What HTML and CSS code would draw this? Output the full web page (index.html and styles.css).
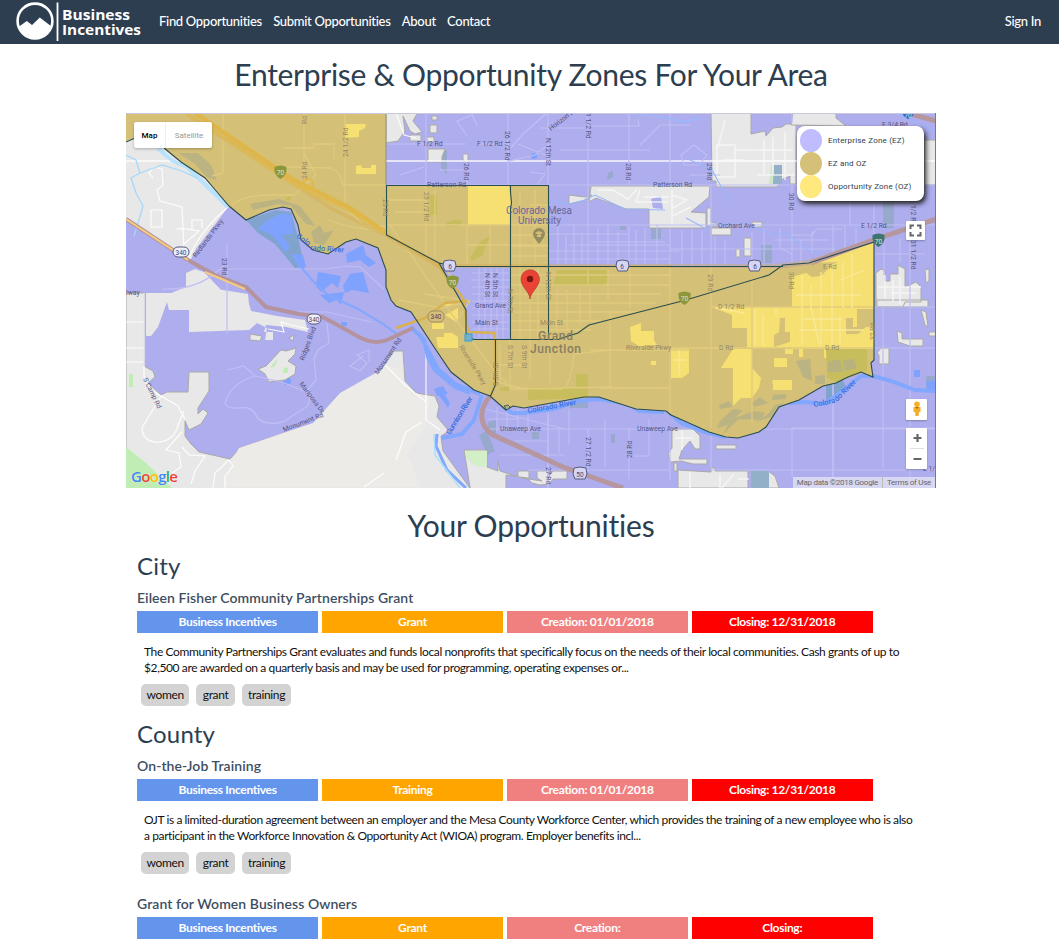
FILE: index.html
```html
<!DOCTYPE html>
<html lang="en">
<head>
<meta charset="utf-8">
<title>Business Incentives</title>
<link rel="stylesheet" href="styles.css">
</head>
<body>
<header class="navbar">
  <svg class="logo" width="126" height="44" viewBox="0 0 126 44" role="img" aria-label="Business Incentives">
    <circle cx="19" cy="21" r="17.4" fill="none" stroke="#fff" stroke-width="2.6"/>
    <path d="M2.500 27L10.800 21L16 25L23.800 17.500L35.500 26.500A17.500 17.500 0 0 1 2.500 27Z" fill="#fff"/>
    <path d="M41.500 2.500V41" stroke="#fff" stroke-width="1.800"/>
    <text class="logo-text" x="46" y="20" textLength="68" lengthAdjust="spacingAndGlyphs">Business</text>
    <text class="logo-text" x="46" y="35" textLength="79" lengthAdjust="spacingAndGlyphs">Incentives</text>
  </svg>
  <nav class="links">
    <a>Find Opportunities</a><a>Submit Opportunities</a><a>About</a><a>Contact</a>
  </nav>
  <a class="signin">Sign In</a>
</header>
<main class="page">
  <h1 class="title title-zones">Enterprise &amp; Opportunity Zones For Your Area</h1>
  <section class="map">
    <svg class="map-canvas" width="810" height="375" viewBox="126 113 810 375">
      <rect x="126" y="113" width="810" height="375" fill="#aeadee"/>
      <!-- parks and water inside the enterprise zone -->
      <path fill="#98a9cd" d="M441 153l6-3v24l-6-6zM761 245h11v18h-11zM883 200h11v28h-11zM488 422l8-2v14l-9-2zM479 435l8-4 8 20-8 4zM532 432h7v7h-7zM570 400h18v8h-18zM611 434h4v9h-4zM620 226h6v4h-6zM651 226h10v13h-10zM608 173l5-2v6l-6 3zM926 376h9v16h-9z"/>
      <path fill="#81a4cf" d="M246 220l30-10 15 2 7 25 3 14 4 16-10 1-20-24-17-11zM826 378l14-5 6 15-20 13z"/>
      <g fill="#7fa2ff">
        <path d="M266 221l17-8 9 3 1 18-12 1 9 11-4 6-14-17-14-6zM346 254l17-9 3 10 10 8-7 4-9-7-13 3zM291 254l12 1 3 12-6 2zM318 272l23 4-3 12-6-5-11 9-5-6zM350 274l13-2 6 21-17-3-7 3-2-7zM320 295l24-3-3 13-4-5-8 3zM434 389l9-3 5 8-11 2zM438 394l3-5 9 14-2 5z"/>
        <circle cx="534" cy="156" r="3"/><circle cx="287" cy="381" r="4"/><path d="M341 322h6v4h-6zM914 370h6v7h-6zM926 382l9-2v10h-8z"/>
      </g>
      <!-- land outside of every zone -->
      <g fill="#e8e8e8" stroke="#aaa9a8" stroke-width="1">
        <path d="M125 142l9-4 30 10 17 14 24 16 12 14 12 14-33 43-7 14-24-19-39-26z" stroke="none"/>
        <path d="M195 269l9 3 18 19-18-4 44 7 1 10 2 7 26 5 28 4 3 12-22-5-20-2-2 7 9 0v8h-8l2-12-10-5-8 7-60 2v-22h-20l-2-8-9 25-7 9-5 0V293h25l15-6v-14z" stroke="none"/>
        <path d="M126 293h18v73l9 5 2 6-7 6 13 12 6-3h21l1-20h20v19l-11 17v6l5-5 5 4-7 11-12 6-4-9v15l6 8 8 8 31 7 10-11 44-15 30-9 13-16 17-15 33-17 17-25 9 0 2 30 11 12 19 3 4 10-2 11 12 14-8 5 2 15 29 40H126z"/>
        <path d="M250 334l12 2-2 5-10-1zM289 338l5-3-1 6zM281 350l5 1 10-3-1 6-7 7 8 5-1 8-10 6-16 2-4-8-7-5 8-3z"/>
        <path d="M386 113v30l12-2 7-10-2-15 7 15 5 3 7-2-9-11 5-9zM432 116h5v4h-5zM430 125h7v8h-7zM410 135l11 0v6h-11zM427 137h7v5h-7zM428 149h17l-3 8v5h-14zM463 154h5v9l-5-3z"/>
        <path d="M569 195l16 2 7-2-9 6-14 3zM591 186h119l-1 11-18 15 15 1v15h-57v-19h-23l-30-11-7 4z"/>
        <path d="M711 113h40v21l14-3 1 5 7-8 9-1 4-3h10v60h-6v-8l-7 3-6 8h-61v-6h-4z"/>
        <path d="M711 208h-4v18h10v-3l-6-1zM711 228h20v7h-20zM752 222h10v5h-10zM744 238h7v18h-7zM736 249h4v8h-4zM793 113h43v-1l0 6 10 8-55-1zM924 140h12v45h-12z"/>
        <path d="M876 273l5-4 4 2v10h5v-7l8 0v-9l7 4v18l11-5 5 5v15h-16l-2 5h-27zM925 270l4-1v12l-3 2zM921 310l5 2 2 15-3-2zM897 331l5 2v6h21v7h-13l-12-4zM881 348h8v16h-10v-9l-2-2zM877 300h51v7h-51zM929 332h7v4h-7z"/>
        <path d="M672 429h21l7 7v13h-5l-5-8-8 9-3 9h28v5h-14l-12-3-11 1-2-9 4-5zM716 445h20v4h-20zM678 470l33 2v-4l4 0v3h33v17h-70zM768 471l7 5 4 12h-11zM674 463h3v8h-3z"/>
        <path d="M464 450h23v17l11 4v-10l2 10 15 5h3v-5h11v7h-7l20 3-5-3v-7h12l0 5 4-5h14v8h-14l-4 5-9 1-8-2-5-5-21-3v18h-35z"/>
      </g>
      <path fill="#aeadee" d="M651 199l10-3 2 13-10-1z"/>
      <path fill="#c0edb3" d="M126 447l20 16 26 25h-46zM129 374h4v13h-4zM272 365l6-7-3 8-5 2zM284 367l4 1v5h-5z"/>
      <path fill="#d2efc8" d="M466 451h21v15l-10 1-11-9z"/>
      <path fill="#ecebe8" d="M233 459l6-11 44-15 30-10 27-30 48-27 11 2 4 15 12 10 15 4-3 27-20 30 14 33H222z"/>
      <path fill="#cfe6c6" d="M771 165h3v19h-5z"/><path fill="#92b0c8" d="M774 165h8v19h-9zM751 471h18v17h-18z"/>
      <!-- streets -->
      <g fill="none" stroke="#fff" stroke-width="1.2" opacity=".9">
        <path d="M144 293v83q1 12 17 20l17 10 7 13M126 322h18M126 348h18M126 362h18M162 395q-9 14-20 33c0 20 32 19 36-3l6-14M182 432l-16 18 13 3 2 14-9 6M182 447l7 8 16 1-10 15-4 13M229 460l-14 13-2 15M229 460l4 6-8 10v12M396 113l8 22 12 3M153 178l-4-5 5-6 8 2 1 16-6 5 3 11 22 6 2 44M151 210h11v17h-11zM176 229h16v-9h10v8M183 245l16-14-20-3M229 206q-30 25-42 56M268 329l16 3-3-10 10 3 18 4M426 345v75l14 10M385 365l20 20 20 16M396 460l10-28 16-10M364 487l20-14"/>
        <path d="M126 161h810" stroke-width="1.6"/>
      </g>
      <g fill="none" stroke="#f8f8f8" stroke-width="1.5" opacity=".8">
        <path d="M717 145h18v32h-18zM725 120l-7 27M735 150h18M722 160h22M764 140v35M773 137v38M785 132v48M754 150h39M757 175h38M598 190l15 0 15 9 9-10M640 190l-4 12h32M644 197h25M672 195l15 5-14 8M672 216l19-9M672 190v36M885 275v23M893 280v22M900 277v27M878 287h43M891 293h25M675 438h18M682 430v20M690 472v16M720 474v14M734 474l-12 14M738 479h11"/>
      </g>
      <g fill="none" stroke="#c0bff4" stroke-width="1.2">
        <path d="M386 185h550M386 144h40M436 144h30M426 113v72M467 163v22M508 113v72M548 113v375M588 126v142M629 113v71M629 226v42M670 113v72M670 228v40M711 185v83M752 232v30M792 113v10M792 185v78M833 225v263M874 203v40M549 225h120M669 225h267M549 144l-14 11-26 6-1-10 15-17 25-22M586 113l3 13h50l-1-7M467 136l-10-15 15-6 5 10M477 144h31M518 144l30 12M518 205l30 2M440 170h30M400 175l24-8M530 172l15 2-8 11M540 128h48M560 150h90M640 145l20-20h30M681 155l13-10 13 10-8 10h-15zM690 175h30M608 225v43M570 245h100M558 225v43M566 235v33M574 225v43M582 233v34M598 227v40M618 232v35M636 230v38M645 228v40M657 225v43M682 230v38M692 229v39M702 230v38M549 234h80M549 251h130M549 259h120M590 242h75M670 249h165M715 237v30M725 240v27M764 228v35M774 240h55M780 228v20l12 6M801 239v24M812 231v23M845 225v27M856 228v20M792 235h20l5-6h25M850 190v35M875 254h50M910 225v263M884 245v30M900 238v24"/>
        <path d="M227 244v90M227 269h98l24-3 11 1 24 22M284 312l43 0 44 10M162 289q40 2 65-27M227 370l17-4 11 10 27 6 24 10 10-12-2-21 4-9 11-7-2-20M255 376q-26 8-30 28c8 10 20-3 30 9 5 15 30 11 34 5l19-12 3-14M363 356l-13 10 10 5 7-8-10-8 12-5v12M485 409l80 20h371M488 419h30M497 407v24M507 408v20M518 409v20M528 412v20M548 415v73M559 428v25M569 409v35M588 429v43M605 420v46M629 429v50M649 419v37h-20M670 429v51M711 428v43M792 428v49M833 428v50M485 429h183M515 441h33M500 455h64M528 470h108M608 470h61M711 470h225M792 428h144M833 380v100M883 308v160M874 348h62M874 307h62"/>
      </g>
      <!-- rivers and creeks -->
      <g fill="none">
        <path d="M158 148q15 16 28 18l32 31 10 10" stroke="#b9e2ff" stroke-width="4"/>
        <path d="M126 155l10 5 4 13-9 5 5 15 7 13-5 17-4 13M140 173l22-8 20 6 15 7" stroke="#a5d8fa" stroke-width="1.3"/>
        <path d="M411 327l13 13 4 17 7 13 20 17 15 6M420 335l18 34 17 15 25 10M482 395l-8 25-12 14-20 4M502 406l10 7 12 0 30-4 23-8 22-2 30 5 10 7 25 1M669 412l12 11 24 9 20 5M788 403l18-1 18 2 15-10 22-18h12l18 5 24 9 22 1" stroke="#81a7ff" stroke-width="4"/>
        <path d="M301 267l10 12 17 16 30 14 25 15 15 11" stroke="#81a7ff" stroke-width="2"/>
        <path d="M437 434l-1 12 11 24 19 18" stroke="#81a7ff" stroke-width="3"/><path d="M434 434l1 21 19 25 6 8" stroke="#ace0fa" stroke-width="1.5"/>
        <path d="M626 113l28 3 30 5 16-3M666 117l18 6 15-5M549 201l20 3 16-4 10-5 30 14 40 1M688 159l24 11 18 33M686 218l24 13M712 224l35 0 25 10 16 0 20 16 22 7 34-3M896 113l40 19" stroke="#99b8fb" stroke-width="1.1"/>
      </g>
      <!-- combined enterprise and opportunity zones -->
      <path fill="#d5c078" d="M126 113h260v72h163v81h234l26-3 65-21v118l-3 3 2 14-12-5-13 5-12 6-13 3-24 14-20 7-13 20-7 5-21 6-12-1-17-5-38-17-5-4-30-2-37-12h-15l-60 11-11-2-7 4-16-14-16-6-23-18-15-22-17-26-8-12-15-6-5-6-5-13v-17l-8-22-22-9-10 3-18 12-15-4-12-10-3-15-7-16-8-2-14 3-23 10-17-14-12-14-12-14-24-16-17-14-30-10-9 4z"/>
      <path fill="#aeadee" d="M439 263l16 3h55v73h-37l-7-6v-23z"/>
      <path fill="none" stroke="#c0bff4" stroke-width="1.200" d="M472 273h37M470 280h40M472 287h37M472 294h37M472 301h37M472 308h37M472 315h37M472 322h37M472 329h37M479 268v70M485 268v70M491 268v70M497 268v70M503 268v70"/>
      <g fill="#f7e072">
        <path d="M468 185h41l2 18v22h-43zM792 277l14-4 5-10 63-20v106h-82zM712 307h80v41h-45v-20h-15v-13zM721 368l12-19h19v19l9 10-2 10-7 10-11 0-8 8v-38zM774 358h13v9h-13zM773 380h19v10h-19v-6l-1-1zM785 349h8v5h-8zM799 349h4v8h-4zM824 349h8v9h-8zM630 327l11-4v8h13v9l3 5-12 0-3 3-11-7zM670 348h19v25l-7 5h-11v-25zM651 361h5v4h-5zM345 124h21l-1 4-6 3v6l-14 1zM356 166l5-1 1 3h9v-3h5v9h-20zM445 315l13-7v15zM432 323h12v6h-12zM436 337l8 0v-4h8l6 4v11h-20zM443 302h9v4h-9z"/>
      </g>
      <path fill="#d5c078" d="M857 309h17v18h-8l-8 7h-12v-16h7v9h4zM780 318h5v14h5v10l-16 5v-12l5-3zM809 263l30-1-6 2-12 12-9 1-7-5z"/>
      <g fill="#c8bd5c"><path d="M557 270h50l2 12-9 4h-47zM528 387h48v-13h12v24l-60 2zM430 195h7v20h-7zM446 223l10-4 7 2-4 5-13 1zM470 258l10-16 10-6-8 20-10 5zM500 387h10v4h-10zM826 349h41v22l-30 11-10-4zM285 199l6-4-1 6z"/></g>
      <g fill="#b3af87"><path d="M178 153h20l13 12 6 15-9-2-14-15zM311 232l9-7 4 8 10-3-10 15-10-2zM796 361l14-2 2 22-9-4zM815 376l10-1v9h-10zM828 362l12-3 3 13h-15zM843 360l11-1 3 9-13 3zM719 405l10-4 4 6-13 2zM720 421l13-12 10 1-8 8 19-7 11 2-5 7-21-1-16 15 5-9-11 3zM752 403l8-6 8 6-14 4zM773 395l13-1 0 5-14 1zM754 422l14-8 7-9 9-2-12 14zM250 204l29-5 21 7 15 20-9-2-15-18-13-2-25 6z" opacity=".75"/></g>
      <g fill="none" stroke="#dfca7d" stroke-width="1.3">
        <path d="M223 113v60l-11 3M304 113v60M345 113v95l20 18h21M386 225h163M426 185v73M435 190v68M467 225v41M467 245h82M490 225v41M520 190v76M535 190v76M386 200h40M395 212h30M530 205h19M511 213h38M511 235h38M511 246h38M511 256h38M283 167l48 1q9 3 12 17h43M232 205q10-10 40-10l22 0 22-20-12-22M284 148h30v-4h20v15M328 220q25 10 58 10M548 266v73M520 266v73M530 266v73M538 266v73M557 290v49M567 290v40M580 290v35M590 290v30M511 275h160M511 285h158M511 294h150M511 303h145M511 312h130M511 321h90M511 330h80M588 284v-14M608 270v30M630 268v40M670 268v145M711 266v162M752 278v145M711 307h163M670 348h204M610 310v77M590 350h100M500 345v38l20 5 42 1q9-3 12-35l36-4M510 340v50M530 340v39M550 340v43M500 365h25M600 388h70M390 225l66 95 38 50 18 19 100-2M399 300l42 8 25-6M425 294l45 7-15 22M445 267l11 18"/>
      </g>
      <g fill="none" stroke="#fae996" stroke-width="1.3"><path d="M802 275v70M811 285v23l8 35M821 272v74M832 264v83M843 262v46M852 254v54M796 295h65M799 330h65M804 319h38M755 310v35M763 314v32M776 308v8M716 308l28 5M674 360h12M679 350v25M840 280l25-10M840 315v30"/></g>
      <!-- main roads -->
      <g fill="none" stroke-linejoin="round">
        <path d="M126 219l62 41 27 15 31 12 20 20 33 7 24 3 36 20q15 8 28 3l26-12" stroke="#b5939e" stroke-width="4"/>
        <path d="M126 219l62 41M205 272l40 17" stroke="#f5cc7e" stroke-width="2"/>
        <path d="M187 114l147 96 52 25 52 31 34 0h304l33-4 61-21 56-18" stroke="#d2ad4f" stroke-width="4" opacity=".4"/>
        <path d="M195 113l97 66 60 30 34 24" stroke="#dfb649" stroke-width="4.500"/>
        <path d="M187 114l106 70 56 27 38 23" stroke="#e1ba49" stroke-width="1.500"/>
        <path d="M386 234l50 29 27 35 5 34 27 1v13M396 328l29-10 20-15 22-2M495 340v43l-4 13" stroke="#d8b250" stroke-width="2.500"/>
        <path d="M490 396c-10 12-13 28 3 39l70 32 60 21" stroke="#b6969f" stroke-width="5"/>
        <path d="M811 263l65-24 60-20" stroke="#b6969f" stroke-width="5"/>
        <path d="M669 267h116l30-4M549 266h122" stroke="#c5ad8c" stroke-width="2"/>
        <circle cx="308" cy="184" r="5" stroke="#e1b846" stroke-width="2"/><path d="M908 113l28 8" stroke="#b6969f" stroke-width="5"/>
      </g>
      <!-- zone outlines -->
      <g fill="none" stroke="#294e4c" stroke-width="1.1">
        <path d="M126 142l9-4M164 148l17 14 24 16 12 14 12 14 17 14 23-10 14-3 8 2 7 16 3 15 12 10 15 4 18-12 10-3 22 9 8 22v17l5 13 5 6 15 6 8 12 17 26 15 22 23 18 16 6 16 14 7-4 11 2 60-11h15l37 12 30 2 5 4 38 17 17 5 12 1 21-6 7-5 13-20 20-7 24-14 13-3 12-6 13-5 12 5-2-14 3-3V242l-65 21-26 2-14 10-83 25-97 25-11 8-19 6M559 339.500h-86l-7-6.500v-23l-27-47-52.500-28v-49.500h162v154M510.500 186v6l1 11-1 5v131M439 263l16 3.500h328M495.500 339v46l-5 11"/>
        <path d="M386 113v72" stroke="#8c865e" stroke-width=".8"/>
      </g>
      <path d="M504 406l4-1 2 2-3 3z" fill="#b3af87" stroke="#294e4c" stroke-width=".8"/>
      <rect x="465" y="334" width="7" height="7" fill="#7aaec4" stroke="#27a4ea"/>
      <!-- map labels -->
      <g class="place">
        <text x="506" y="214" textLength="66">Colorado Mesa</text><text x="518" y="223.500" textLength="43">University</text>
      </g>
      <g class="city"><text x="538" y="340" textLength="35">Grand</text><text x="530" y="353" textLength="51">Junction</text></g>
      <g class="road">
        <text x="417" y="146">F 1/2 Rd</text><text x="477" y="146">F 1/2 Rd</text><text x="427" y="187">Patterson Rd</text><text x="653" y="187">Patterson Rd</text>
        <text x="551" y="131" transform="rotate(-38 551 131)">Horizon Dr</text><text x="718" y="228">Orchard Ave</text><text x="861" y="228">E 1/2 Rd</text><text x="882" y="127">E 3/4 Rd</text><text x="475" y="308">Grand Ave</text><text x="475" y="325">Main St</text><text x="500" y="431">Unaweep Ave</text><text x="637" y="431">Unaweep Ave</text><text x="126" y="295">lway</text><text x="923" y="471">E 1/2</text>
        <text transform="translate(505 131) rotate(90)">26 1/2 Rd</text><text transform="translate(546 138) rotate(90)">N 12th St</text><text transform="translate(586 113) rotate(90)">1 1/2 Rd</text><text transform="translate(464 163) rotate(90)">26 Rd</text><text transform="translate(626 163) rotate(90)">28 Rd</text><text transform="translate(707 163) rotate(90)">29 Rd</text><text transform="translate(789 193) rotate(90)">30 Rd</text><text transform="translate(911 205) rotate(90)">1/2 Rd</text><text transform="translate(911 240) rotate(90)">31 1/2 Rd</text><text transform="translate(222 258) rotate(90)">23 Rd</text><text transform="translate(485 273) rotate(90)">N 4th St</text><text transform="translate(492.500 273) rotate(90)">N 5th St</text><text transform="translate(586 437) rotate(90)">27 1/2 Rd</text><text transform="translate(632 458) rotate(-90)">28 Rd</text><text transform="translate(546 467) rotate(90)">27 Rd</text>
        <text transform="translate(196 258) rotate(-53)">Redlands Pkwy</text><text transform="translate(304 361) rotate(-70)">Ridges Blvd</text><text transform="translate(299 384) rotate(53)">Mariposa Dr</text><text transform="translate(284 432) rotate(-21)">Monument Rd</text><text transform="translate(378 375) rotate(-56)">Monument Rd</text><text transform="translate(143 379) rotate(64)">S Camp Rd</text>
      </g>
      <g class="road muted">
        <text transform="translate(307 124) rotate(-90)">Rd N</text><text transform="translate(307 179) rotate(-90)">24 Rd</text><text transform="translate(348 157) rotate(-90)">24 1/2 Rd</text><text transform="translate(383 199) rotate(90)">25 Rd</text><text transform="translate(424 192) rotate(90)">25 1/2 Rd</text><text transform="translate(546 272) rotate(90)">N 12th St</text><text transform="translate(508 289) rotate(90)">N 7th St</text><text transform="translate(508 345) rotate(90)">S 7th St</text><text transform="translate(522 345) rotate(90)">S 9th St</text><text transform="translate(708 274) rotate(90)">29 Rd</text><text transform="translate(789 272) rotate(90)">30 Rd</text><text transform="translate(459 347) rotate(58)">Riverside Pkwy</text><text transform="translate(498 386) rotate(-90)">S 5th St</text><text x="540" y="325">Main St</text><text x="626" y="350">Riverside Pkwy</text><text x="719" y="350">D Rd</text><text x="825" y="350">D Rd</text><text x="823" y="269">E Rd</text><text x="718" y="309">D 1/2 Rd</text><text transform="translate(875 340) rotate(-90)">32 Rd</text>
      </g>
      <g class="river"><text transform="translate(296 237) rotate(36)">Colo</text><text transform="translate(310 250) rotate(4)">rado River</text><text transform="translate(528 413) rotate(-10)" textLength="49">Colorado River</text><text transform="translate(450 435) rotate(-58)" textLength="43">Gunnison River</text><text transform="translate(814 407) rotate(-11)">Colora</text><text transform="translate(837 402) rotate(-45)">do River</text></g>
      <g fill="#eeeefc" stroke="#555a7c">
        <rect x="173" y="247" width="16" height="10" rx="5"/><rect x="307" y="314" width="14" height="10" rx="5"/><rect x="428" y="311" width="16" height="11" rx="5" fill="#d5c078" stroke="#9e8e62"/>
        <path d="M444 261q5-2 11 0l1 5-2 5h-9l-2-5zM617 261q5-2 11 0l1 5-2 5h-9l-2-5zM749 261q5-2 11 0l1 5-2 5h-9l-2-5zM574 468q6-2 12 0l1 6-2 5h-10l-2-5z" fill="#d6d5f5"/>
        <g stroke="none" fill="#8b973a"><path d="M274.500 167q6-3 12 0 1 8-6 12-7-4-6-12z"/><path d="M678.500 293q6-3 12 0 1 8-6 12-7-4-6-12zM446.500 277q6-3 12 0 1 8-6 12-7-4-6-12z"/><path fill="#3d7571" d="M872.500 235q6-3 12 0 1 8-6 12-7-4-6-12z"/><path fill="#326bd7" d="M902 112h12q0 5-6 7-5-2-6-7z"/></g>
      </g>
      <g class="shield-number"><text x="181" y="255">340</text><text x="314" y="322">340</text><text x="436" y="319">340</text><text x="450" y="269">6</text><text x="622" y="269">6</text><text x="755" y="269">6</text><text x="580" y="477">50</text></g>
      <g class="shield-number light"><text x="280.500" y="175">70</text><text x="452.500" y="285">70</text><text x="684.500" y="301">70</text><text x="878.500" y="243.500">70</text><text x="908" y="118">70</text></g>
      <path fill="#958b5e" d="M539 244q-6-7-6-10a6 6 0 0 1 12 0q0 3-6 10z"/><path fill="#d5c078" d="M535 233l4-2 4 2-4 2zM537 235h4v2h-4z"/>
      <!-- selected location -->
      <path fill="#ea4335" stroke="#b5362c" stroke-width=".7" d="M530 299c0-7-9-12-9-20a9.200 9.200 0 0 1 18.400 0c0 8-9 13-9.400 20z"/><circle cx="530" cy="279" r="3.200" fill="#7b1610"/>
      <path d="M126 113.500h810" stroke="#c9c8dc"/><path d="M935.500 113v375" stroke="#77769a"/>
    </svg>
    <div class="map-type"><span class="active">Map</span><span>Satellite</span></div>
    <ul class="legend">
      <li><i class="dot ez"></i>Enterprise Zone (EZ)</li><li><i class="dot both"></i>EZ and OZ</li><li><i class="dot oz"></i>Opportunity Zone (OZ)</li>
    </ul>
    <div class="control fullscreen"><svg width="19" height="19" viewBox="0 0 19 19"><path d="M4.500 8V4.500H8M11 4.500h3.500V8M14.500 11v3.500H11M8 14.500H4.500V11" fill="none" stroke="#666" stroke-width="2"/></svg></div>
    <div class="control pegman"><svg width="21" height="21" viewBox="0 0 21 21"><circle cx="11" cy="5.300" r="2.800" fill="#f5ae27"/><path d="M7.500 8h7v5h-1.500l-.5 4h-3L9 13H7.500z" fill="#f5ae27"/><path d="M9 8h4l-2 2z" fill="#b36f19"/></svg></div>
    <div class="control zoom"><svg width="21" height="41" viewBox="0 0 21 41"><path d="M7.500 10h8M11.500 6v8M7.500 31h8" stroke="#666" stroke-width="2.200"/><path d="M4 20.500h14" stroke="#e0e0e0"/></svg></div>
    <div class="google"><span>G</span><span>o</span><span>o</span><span>g</span><span>l</span><span>e</span></div>
    <div class="credits"><span>Map data ©2018 Google</span><span>Terms of Use</span></div>
  </section>
  <h1 class="title title-list">Your Opportunities</h1>
  <section class="list">
    <h2 class="level">City</h2>
    <article class="item">
      <h3 class="name">Eileen Fisher Community Partnerships Grant</h3>
      <div class="facts"><span>Business Incentives</span><span>Grant</span><span>Creation: 01/01/2018</span><span>Closing: 12/31/2018</span></div>
      <p class="summary"><span class="line">The Community Partnerships Grant evaluates and funds local nonprofits that specifically focus on the needs of their local communities. Cash grants of up to</span><span class="line">$2,500 are awarded on a quarterly basis and may be used for programming, operating expenses or...</span></p>
      <div class="tags"><span>women</span><span>grant</span><span>training</span></div>
    </article>
    <h2 class="level">County</h2>
    <article class="item">
      <h3 class="name">On-the-Job Training</h3>
      <div class="facts"><span>Business Incentives</span><span>Training</span><span>Creation: 01/01/2018</span><span>Closing: 12/31/2018</span></div>
      <p class="summary"><span class="line">OJT is a limited-duration agreement between an employer and the Mesa County Workforce Center, which provides the training of a new employee who is also</span><span class="line">a participant in the Workforce Innovation &amp; Opportunity Act (WIOA) program. Employer benefits incl...</span></p>
      <div class="tags"><span>women</span><span>grant</span><span>training</span></div>
    </article>
    <article class="item">
      <h3 class="name">Grant for Women Business Owners</h3>
      <div class="facts"><span>Business Incentives</span><span>Grant</span><span>Creation:</span><span>Closing:</span></div>
    </article>
  </section>
</main>
</body>
</html>
```
FILE: styles.css
```css
* { box-sizing: border-box; }
body { margin: 0; height: 947px; overflow: hidden; background: #fff; color: #2c3e50; font-family: Lato, sans-serif; }
.navbar { display: flex; align-items: center; height: 44px; padding: 0 18px 2px 16px; background: #2c3e50; color: #fff; font-size: 13px; font-weight: 500; letter-spacing: -.3px; }
.logo { margin-top: 2px; flex: none; letter-spacing: 0; }
.logo-text { font: 700 14px "Open Sans", sans-serif; fill: #fff; }
.links { display: flex; gap: 11.300px; margin-left: 17px; }
.signin { margin-left: auto; }
.page { width: 810px; margin-left: 126px; }
.title { margin: 0; font-size: 30px; font-weight: 400; line-height: 36px; text-align: center; white-space: nowrap; letter-spacing: -.28px; }
.title-zones { padding: 12px 0 21px; }
.title-list { padding: 19px 0 8px; letter-spacing: -.2px; }
.map { position: relative; height: 375px; overflow: hidden; }
.map-canvas { display: block; }
.map text { font-family: Roboto, sans-serif; }
.place { font-size: 10px; fill: #68679a; }
.city { font-size: 12px; font-weight: 500; fill: #867d62; }
.road { font-size: 6.8px; fill: #555580; }
.muted { fill: #958762; }
.river { font-size: 7.5px; font-weight: 500; fill: #3970df; }
.shield-number { font-size: 6.5px; fill: #474769; text-anchor: middle; }
.shield-number.light { fill: #e4e3ce; }
.map-type { position: absolute; left: 8px; top: 9px; display: flex; width: 78px; height: 26px; background: #fff; border-radius: 2px; box-shadow: 0 1px 3px #0004; font: 400 8px/27px Roboto, sans-serif; color: #999; text-align: center; }
.map-type span { width: 46px; }
.map-type .active { width: 32px; border-right: 1px solid #eee; color: #000; font-weight: 500; }
.legend { position: absolute; left: 671px; top: 13px; width: 127px; height: 75px; margin: 0; padding: 3px; list-style: none; background: #fff; border-radius: 8px; box-shadow: 2px 3px 5px #222; font: 400 8px Roboto, sans-serif; letter-spacing: .2px; }
.legend li { display: flex; align-items: center; gap: 6px; height: 23px; white-space: nowrap; }
.dot { width: 22px; height: 23px; border-radius: 50%; }
.ez { background: #bfbdfe; }
.both { background: #d5c078; }
.oz { background: #ffe87d; }
.control { position: absolute; background: #fff; border-radius: 1px; box-shadow: 0 1px 2px #0004; }
.control svg { display: block; }
.fullscreen { left: 780px; top: 108px; }
.pegman { left: 780px; top: 286px; }
.zoom { left: 780px; top: 315px; }
.google { position: absolute; left: 5px; top: 354px; font: 600 15px/19px "Open Sans", sans-serif; letter-spacing: -.7px; color: #4285f4; text-shadow: 0 0 1px #fff; }
.google span:nth-child(2), .google span:nth-child(6) { color: #ea4335; }
.google span:nth-child(3) { color: #fbbc05; }
.google span:nth-child(5) { color: #34a853; }
.credits { position: absolute; right: 1px; bottom: 0; display: flex; height: 11px; background: #e3e2f2cc; color: #666; font: 400 8px/11px Roboto, sans-serif; letter-spacing: -.28px; }
.credits span { padding: 0 4px; }
.credits span + span { border-left: 1px solid #bbb; }
.list { padding-left: 11px; }
.level { margin: 0; font-size: 24px; font-weight: 400; line-height: 30px; letter-spacing: .2px; }
.item { height: 138px; }
.item:last-child { height: auto; }
.name { margin: 0; padding-top: 6px; height: 30px; font-size: 14px; font-weight: 600; line-height: 22px; letter-spacing: .07px; color: #3d4e5f; }
.facts { display: grid; grid-template-columns: repeat(4, 181.200px); gap: 3.700px; color: #fff; font-size: 12px; font-weight: 700; line-height: 22px; text-align: center; letter-spacing: -.3px; }
.facts span:nth-child(1) { background: #6495ed; }
.facts span:nth-child(2) { background: #ffa500; }
.facts span:nth-child(3) { background: #f08080; }
.facts span:nth-child(4) { background: #f00; }
.summary { margin: 11px 0 8px 7px; color: #111; font-size: 12px; line-height: 16px; letter-spacing: -.39px; }
.item ~ .item .summary { letter-spacing: -.4px; }
.line { display: block; white-space: nowrap; }
.tags { display: flex; gap: 7px; padding-left: 4px; }
.tags span { height: 22px; padding: 0 5.500px; background: #d3d3d3; border-radius: 5px; color: #111; font-size: 12px; line-height: 22px; letter-spacing: -.35px; }
.tags span:nth-child(2) { padding: 0 6.500px; }
.tags span:nth-child(3) { padding: 0 6px; }
```
